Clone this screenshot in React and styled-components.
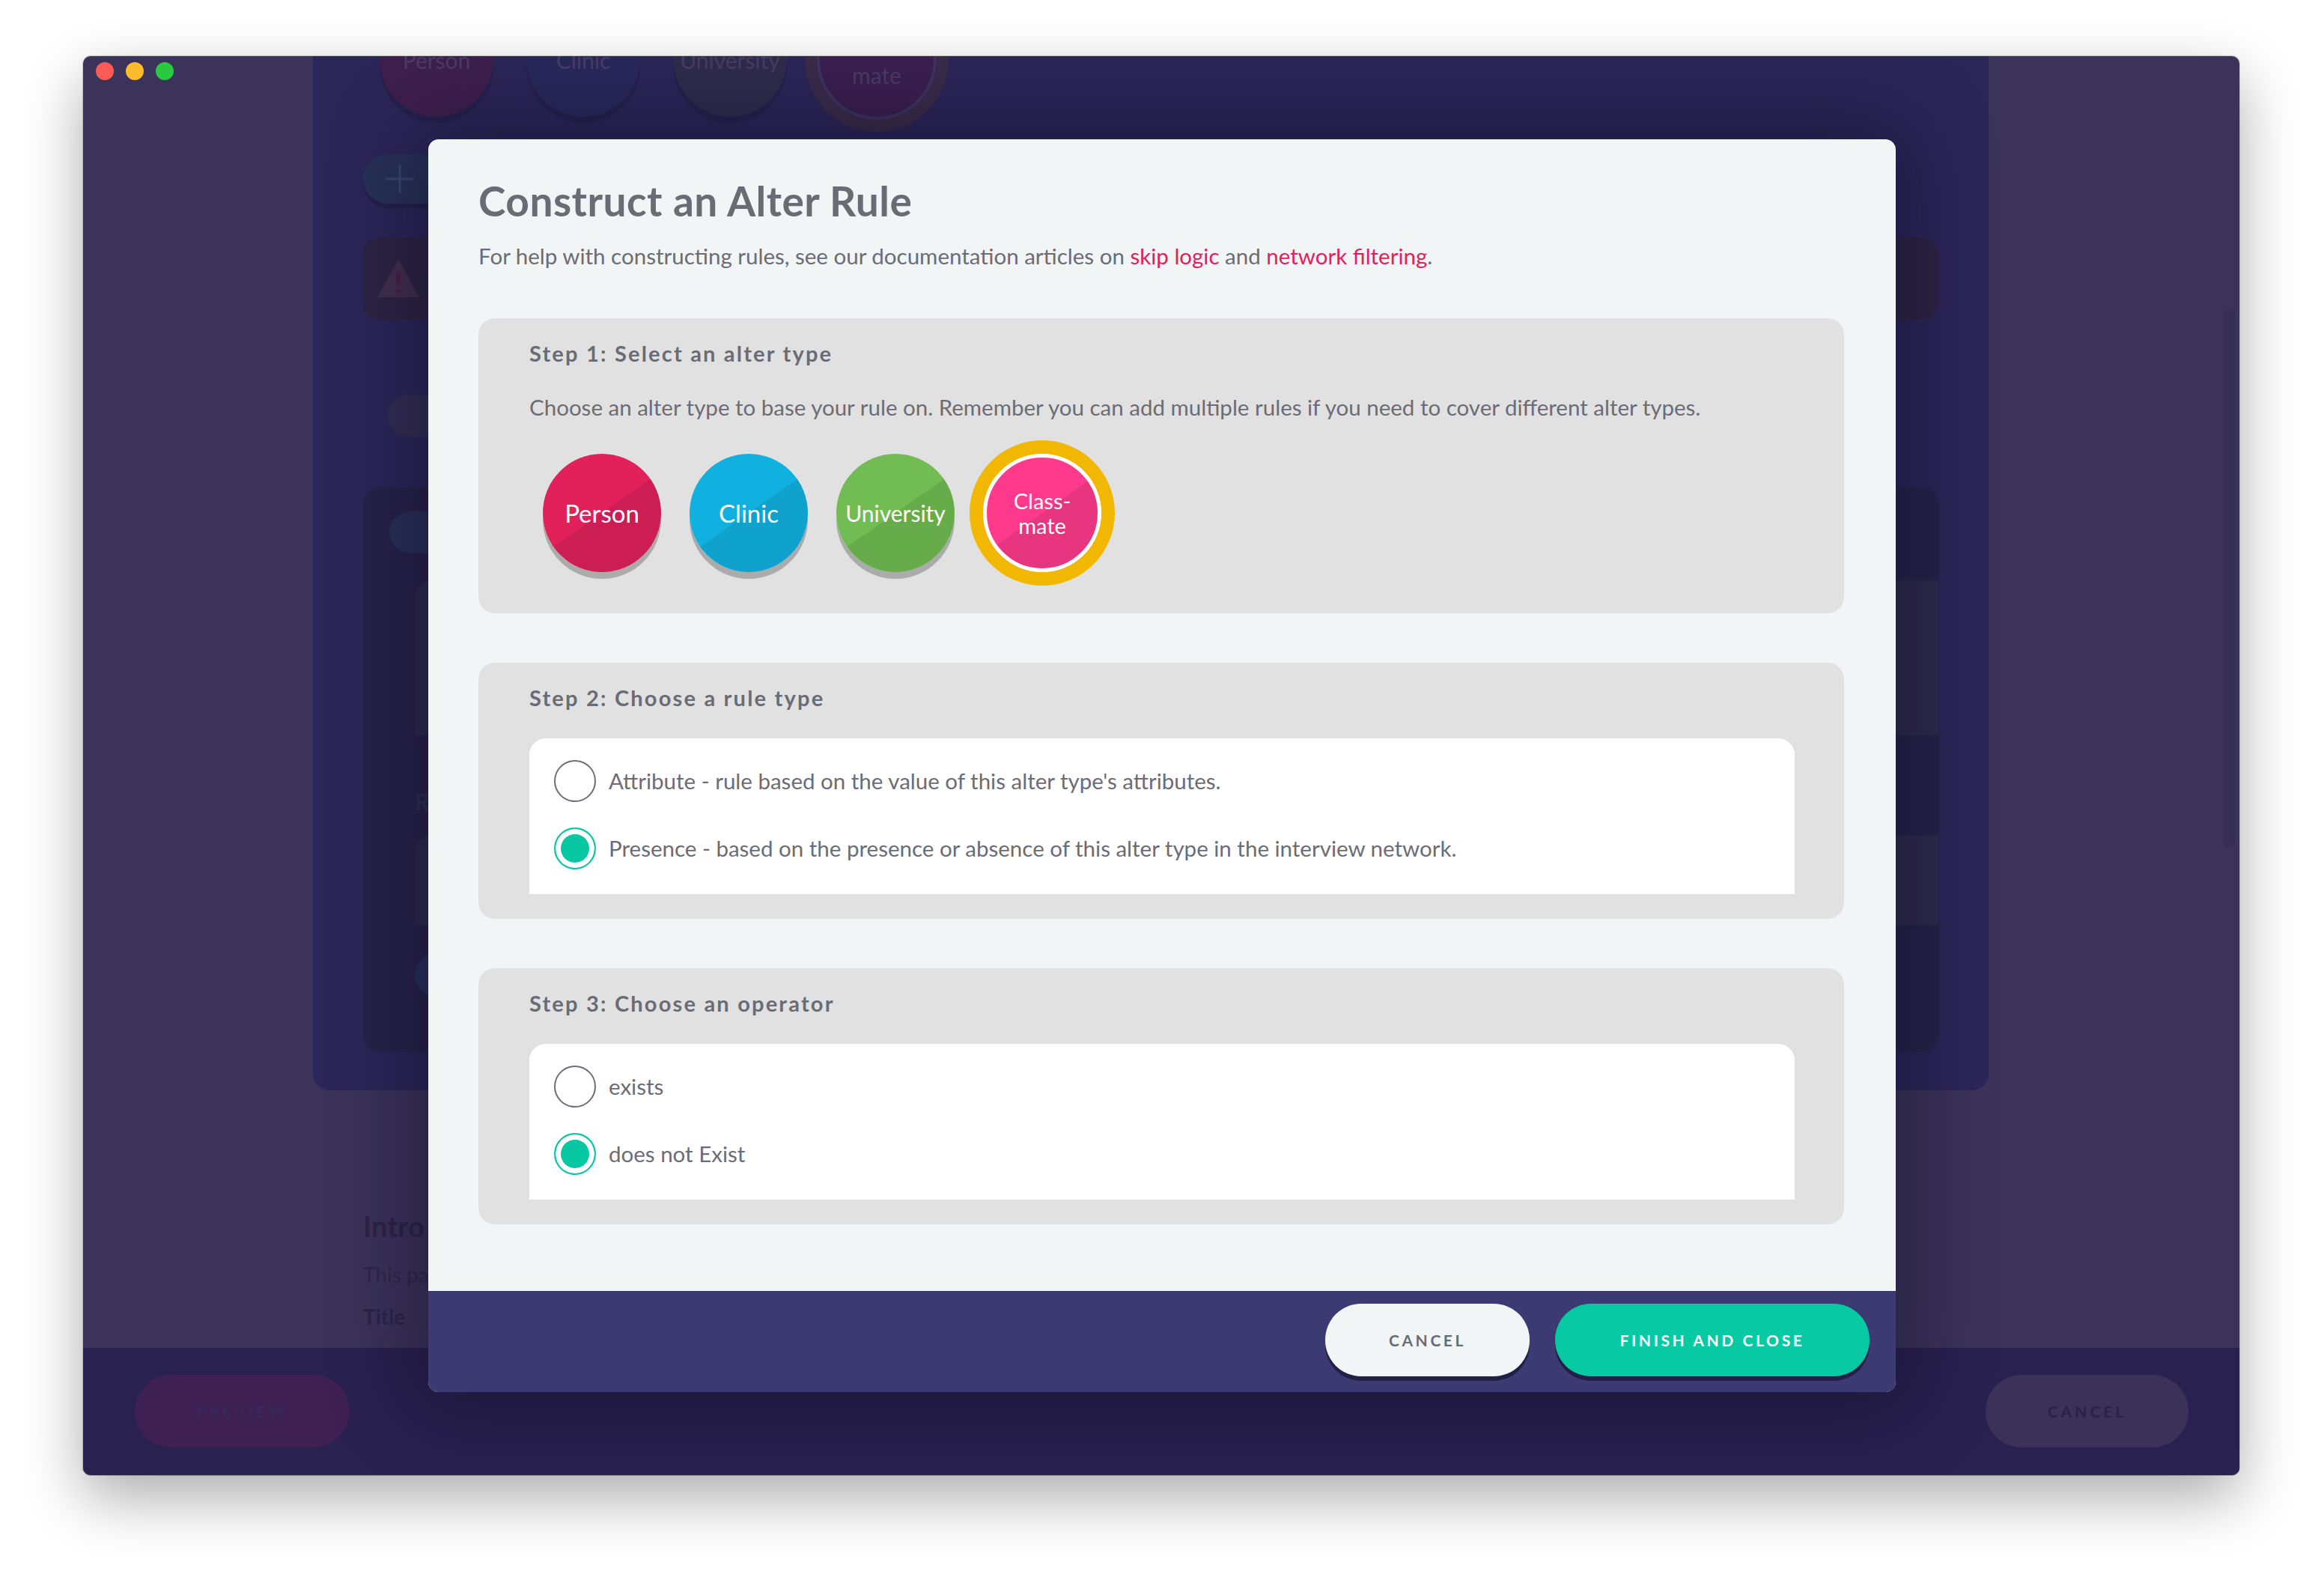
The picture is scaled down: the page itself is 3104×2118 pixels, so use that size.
import React from "react";
import styled, { createGlobalStyle } from "styled-components";

const GlobalStyle = createGlobalStyle`
    html, body {
        margin: 0;
        padding: 0;
        background: #ffffff;
        font-family: Lato, "Open Sans", sans-serif;
    }
    * {
        box-sizing: border-box;
    }
`;

const ALTER_TYPES = [
    { label: "Person", light: "#e2215b", dark: "#cc1d55" },
    { label: "Clinic", light: "#10b1e1", dark: "#0ea2cd" },
    { label: "University", light: "#72bd53", dark: "#67ac4b" },
    { label: "Class-\nmate", light: "#ff3a8c", dark: "#e8357f", selected: true },
];

const BG_NODES = [
    { label: "Person", color: "#3e1f4e" },
    { label: "Clinic", color: "#28295b" },
    { label: "University", color: "#2f2c4c" },
    { label: "mate", color: "#3b1f50", ring: true },
];

export default function App() {
    return (
        <>
            <GlobalStyle />
            <Screen>
                <Window>
                    <Main>
                        <CenterColumn>
                            <Panel>
                                <BgNodeRow>
                                    {BG_NODES.map((n) => (
                                        <BgNodeSlot key={n.label}>
                                            <BgNode color={n.color} ring={n.ring}>
                                                <BgNodeLabel low={n.ring}>{n.label}</BgNodeLabel>
                                            </BgNode>
                                        </BgNodeSlot>
                                    ))}
                                </BgNodeRow>
                                <AddPill>
                                    <svg width="46" height="46" viewBox="0 0 46 46">
                                        <path d="M23 4v38M4 23h38" stroke="#3b4670" strokeWidth="3" />
                                    </svg>
                                </AddPill>
                                <WarningCard>
                                    <svg width="62" height="56" viewBox="0 0 62 56">
                                        <path d="M31 3L59 53H3Z" fill="#43304f" />
                                        <rect x="28" y="20" width="6" height="18" rx="2" fill="#4b2146" />
                                        <circle cx="31" cy="45" r="3.5" fill="#4b2146" />
                                    </svg>
                                </WarningCard>
                                <SmallPill />
                                <RuleCard>
                                    <TealPill />
                                    <GhostBlock tall />
                                    <GhostHeading>R</GhostHeading>
                                    <GhostBlock />
                                    <GhostPill />
                                </RuleCard>
                            </Panel>
                            <IntroSection>
                                <IntroTitle>Intro</IntroTitle>
                                <IntroText>This page</IntroText>
                                <IntroLabel>Title</IntroLabel>
                            </IntroSection>
                        </CenterColumn>
                        <Scrollbar />
                    </Main>
                    <BottomBar>
                        <GhostButton tone="preview">Preview</GhostButton>
                        <GhostButton tone="cancel">Cancel</GhostButton>
                    </BottomBar>

                    <TrafficLights>
                        <Light color="#fd5b56" />
                        <Light color="#fdbc2e" />
                        <Light color="#29c940" />
                    </TrafficLights>

                    <Overlay>
                        <Modal>
                            <ModalContent>
                                <ModalTitle>Construct an Alter Rule</ModalTitle>
                                <ModalIntro>
                                    For help with constructing rules, see our documentation articles on{" "}
                                    <LinkText>skip logic</LinkText> and <LinkText>network filtering</LinkText>.
                                </ModalIntro>

                                <StepBox>
                                    <StepTitle>Step 1: Select an alter type</StepTitle>
                                    <StepText>
                                        Choose an alter type to base your rule on. Remember you can add multiple rules if
                                        you need to cover different alter types.
                                    </StepText>
                                    <NodeRow>
                                        {ALTER_TYPES.map((t) => (
                                            <NodeSlot key={t.label}>
                                                <Node light={t.light} dark={t.dark} selected={t.selected}>
                                                    <NodeLabel small={t.selected} narrow={t.label === "University"}>
                                                        {t.label}
                                                    </NodeLabel>
                                                </Node>
                                            </NodeSlot>
                                        ))}
                                    </NodeRow>
                                </StepBox>

                                <StepBox>
                                    <StepTitle>Step 2: Choose a rule type</StepTitle>
                                    <OptionList>
                                        <Option>
                                            <Radio />
                                            <OptionLabel>
                                                Attribute - rule based on the value of this alter type's attributes.
                                            </OptionLabel>
                                        </Option>
                                        <Option>
                                            <Radio checked />
                                            <OptionLabel>
                                                Presence - based on the presence or absence of this alter type in the
                                                interview network.
                                            </OptionLabel>
                                        </Option>
                                    </OptionList>
                                </StepBox>

                                <StepBox>
                                    <StepTitle>Step 3: Choose an operator</StepTitle>
                                    <OptionList>
                                        <Option>
                                            <Radio />
                                            <OptionLabel>exists</OptionLabel>
                                        </Option>
                                        <Option>
                                            <Radio checked />
                                            <OptionLabel>does not Exist</OptionLabel>
                                        </Option>
                                    </OptionList>
                                </StepBox>
                            </ModalContent>
                            <ModalFooter>
                                <FooterButton>Cancel</FooterButton>
                                <FooterButton primary>Finish and close</FooterButton>
                            </ModalFooter>
                        </Modal>
                    </Overlay>
                </Window>
            </Screen>
        </>
    );
}

/* ---------- window frame ---------- */

const Screen = styled.div`
    width: 3104px;
    height: 2118px;
    padding: 75px 0 0 111px;
    overflow: hidden;
`;

const Window = styled.div`
    position: relative;
    width: 2880px;
    height: 1895px;
    border-radius: 10px;
    overflow: hidden;
    display: flex;
    flex-direction: column;
    background: #3b3359;
    box-shadow: 0 30px 80px rgba(0, 0, 0, 0.33), 0 0 0 1px rgba(0, 0, 0, 0.18);
`;

const TrafficLights = styled.div`
    position: absolute;
    top: 8px;
    left: 17px;
    display: flex;
    gap: 16px;
`;

const Light = styled.span`
    width: 24px;
    height: 24px;
    border-radius: 50%;
    background: ${(p) => p.color};
`;

const Main = styled.div`
    height: 1725px;
    display: flex;
    padding-left: 307px;
`;

const CenterColumn = styled.div`
    width: 2238px;
    display: flex;
    flex-direction: column;
`;

const Scrollbar = styled.div`
    width: 16px;
    height: 718px;
    margin: 339px 0 0 314px;
    border-radius: 8px;
    background: #352e55;
`;

/* ---------- dimmed background app ---------- */

const Panel = styled.div`
    height: 1381px;
    padding: 0 67px;
    background: #2b2658;
    border-radius: 0 0 22px 22px;
    display: flex;
    flex-direction: column;
`;

const BgNodeRow = styled.div`
    display: flex;
    align-items: center;
    margin-top: -91px;
`;

const BgNodeSlot = styled.div`
    width: 196px;
    height: 192px;
    display: flex;
    align-items: center;
    justify-content: center;
`;

const BgNode = styled.div`
    width: ${(p) => (p.ring ? "192px" : "152px")};
    height: ${(p) => (p.ring ? "192px" : "152px")};
    border-radius: 50%;
    background: ${(p) => p.color};
    border: ${(p) => (p.ring ? "16px solid #3a2c4a" : "none")};
    box-shadow: ${(p) => (p.ring ? "inset 0 0 0 4px #3d3560" : "0 8px 0 rgba(0,0,0,0.12)")};
    display: flex;
    align-items: center;
    justify-content: center;
`;

const BgNodeLabel = styled.span`
    font-size: 30px;
    color: #4a3c66;
    margin-top: ${(p) => (p.low ? "40px" : "0")};
`;

const AddPill = styled.div`
    width: 190px;
    height: 66px;
    margin-top: 30px;
    border-radius: 33px;
    background: #283157;
    box-shadow: 0 6px 0 rgba(0, 0, 0, 0.15);
    display: flex;
    align-items: center;
    padding-left: 26px;
`;

const WarningCard = styled.div`
    height: 110px;
    margin-top: 45px;
    border-radius: 22px;
    background: #2e2443;
    display: flex;
    align-items: center;
    padding-left: 16px;
`;

const SmallPill = styled.div`
    width: 160px;
    height: 56px;
    margin: 100px 0 0 33px;
    border-radius: 28px;
    background: #342e53;
`;

const RuleCard = styled.div`
    height: 754px;
    margin-top: 68px;
    border-radius: 22px;
    background: #272249;
    padding: 32px 35px;
    display: flex;
    flex-direction: column;
    align-items: flex-start;
`;

const TealPill = styled.div`
    width: 170px;
    height: 56px;
    border-radius: 28px;
    background: #283058;
`;

const GhostBlock = styled.div`
    width: 100%;
    height: ${(p) => (p.tall ? "207px" : "119px")};
    margin: ${(p) => (p.tall ? "36px 0 0 34px" : "28px 0 0 34px")};
    border-radius: 22px 0 0 0;
    background: #2f2a4b;
`;

const GhostHeading = styled.div`
    margin: 70px 0 0 34px;
    font-size: 30px;
    font-weight: 700;
    color: #332d52;
`;

const GhostPill = styled.div`
    width: 150px;
    height: 58px;
    margin: 38px 0 0 34px;
    border-radius: 29px;
    background: #28305a;
`;

const IntroSection = styled.div`
    padding: 158px 67px 0;
    display: flex;
    flex-direction: column;
`;

const IntroTitle = styled.div`
    font-size: 38px;
    font-weight: 700;
    color: #2b2547;
    line-height: 46px;
`;

const IntroText = styled.div`
    margin-top: 22px;
    font-size: 28px;
    color: #2e2849;
    line-height: 40px;
`;

const IntroLabel = styled.div`
    margin-top: 16px;
    font-size: 28px;
    font-weight: 700;
    color: #2b2547;
    line-height: 40px;
`;

const BottomBar = styled.div`
    height: 170px;
    background: #29214f;
    display: flex;
    align-items: center;
    justify-content: space-between;
    padding: 0 68px 2px 69px;
`;

const GhostButton = styled.div`
    height: 97px;
    width: ${(p) => (p.tone === "preview" ? "287px" : "271px")};
    border-radius: 48px;
    background: ${(p) => (p.tone === "preview" ? "#3e2152" : "#3a3259")};
    color: ${(p) => (p.tone === "preview" ? "#36285a" : "#28224a")};
    display: flex;
    align-items: center;
    justify-content: center;
    font-size: 21px;
    font-weight: 700;
    letter-spacing: 4px;
    text-transform: uppercase;
`;

/* ---------- modal ---------- */

const Overlay = styled.div`
    position: absolute;
    inset: 0;
    padding: 111px 0 0 461px;
    display: flex;
    align-items: flex-start;
`;

const Modal = styled.div`
    width: 1960px;
    height: 1673px;
    border-radius: 14px;
    background: #f1f5f6;
    display: flex;
    flex-direction: column;
    overflow: hidden;
    box-shadow: 0 0 110px 20px rgba(12, 8, 32, 0.45);
`;

const ModalContent = styled.div`
    flex: 1;
    padding: 50px 69px 0 67px;
    display: flex;
    flex-direction: column;
`;

const ModalTitle = styled.h1`
    margin: 0;
    font-size: 55px;
    line-height: 64px;
    font-weight: 700;
    color: #6a6c75;
    letter-spacing: 0.5px;
`;

const ModalIntro = styled.p`
    margin: 22px 0 0;
    font-size: 29.5px;
    line-height: 40px;
    color: #6b6c75;
`;

const LinkText = styled.span`
    color: #e2215b;
`;

const StepBox = styled.section`
    margin-top: 66px;
    &:first-of-type {
        margin-top: 63px;
    }
    border-radius: 22px;
    background: #e1e1e1;
    padding: 29px 66px 33px 68px;
    display: flex;
    flex-direction: column;
`;

const StepTitle = styled.h3`
    margin: 0;
    font-size: 29px;
    line-height: 36px;
    font-weight: 700;
    letter-spacing: 2.2px;
    color: #6a6c75;
`;

const StepText = styled.p`
    margin: 34px 0 0;
    font-size: 29.5px;
    line-height: 40px;
    color: #6b6c75;
`;

const NodeRow = styled.div`
    display: flex;
    margin: 23px 0 3px -1px;
`;

const NodeSlot = styled.div`
    width: 196px;
    height: 196px;
    display: flex;
    align-items: center;
    justify-content: center;
`;

const Node = styled.div`
    width: 158px;
    height: 158px;
    border-radius: 50%;
    background: linear-gradient(145deg, ${(p) => p.light} 50%, ${(p) => p.dark} 50%);
    border: ${(p) => (p.selected ? "5px solid #ffffff" : "none")};
    box-shadow: ${(p) => (p.selected ? "0 0 0 18px #f2b700" : "0 9px 0 rgba(0, 0, 0, 0.24)")};
    display: flex;
    align-items: center;
    justify-content: center;
    text-align: center;
`;

const NodeLabel = styled.span`
    color: #ffffff;
    font-size: ${(p) => (p.small ? "29px" : p.narrow ? "30px" : "33px")};
    line-height: ${(p) => (p.small ? "33px" : "36px")};
    white-space: pre-line;
`;

const OptionList = styled.div`
    margin-top: 36px;
    background: #ffffff;
    border-radius: 22px 22px 0 0;
    padding: 12px 33px 16px;
    display: flex;
    flex-direction: column;
`;

const Option = styled.label`
    height: 90px;
    display: flex;
    align-items: center;
    gap: 17px;
`;

const Radio = styled.span`
    width: 56px;
    height: 56px;
    flex: none;
    border-radius: 50%;
    border: 2.5px solid ${(p) => (p.checked ? "#07c8a3" : "#6d6e77")};
    background: ${(p) => (p.checked ? "#07c8a3" : "#ffffff")};
    box-shadow: ${(p) => (p.checked ? "inset 0 0 0 7px #ffffff" : "none")};
`;

const OptionLabel = styled.span`
    font-size: 29.5px;
    line-height: 40px;
    color: #6b6c75;
`;

const ModalFooter = styled.div`
    height: 135px;
    flex: none;
    background: #3c3a73;
    display: flex;
    justify-content: flex-end;
    align-items: flex-start;
    gap: 34px;
    padding: 17px 35px 0 0;
`;

const FooterButton = styled.button`
    height: 97px;
    width: ${(p) => (p.primary ? "420px" : "273px")};
    border: none;
    border-radius: 48px;
    background: ${(p) => (p.primary ? "#07c9a4" : "#f1f5f6")};
    color: ${(p) => (p.primary ? "#ffffff" : "#6a6c75")};
    box-shadow: 0 6px 0 rgba(16, 14, 40, 0.6);
    font-family: Lato, sans-serif;
    font-size: 21px;
    font-weight: 700;
    letter-spacing: 3.6px;
    text-transform: uppercase;
    cursor: pointer;
`;
